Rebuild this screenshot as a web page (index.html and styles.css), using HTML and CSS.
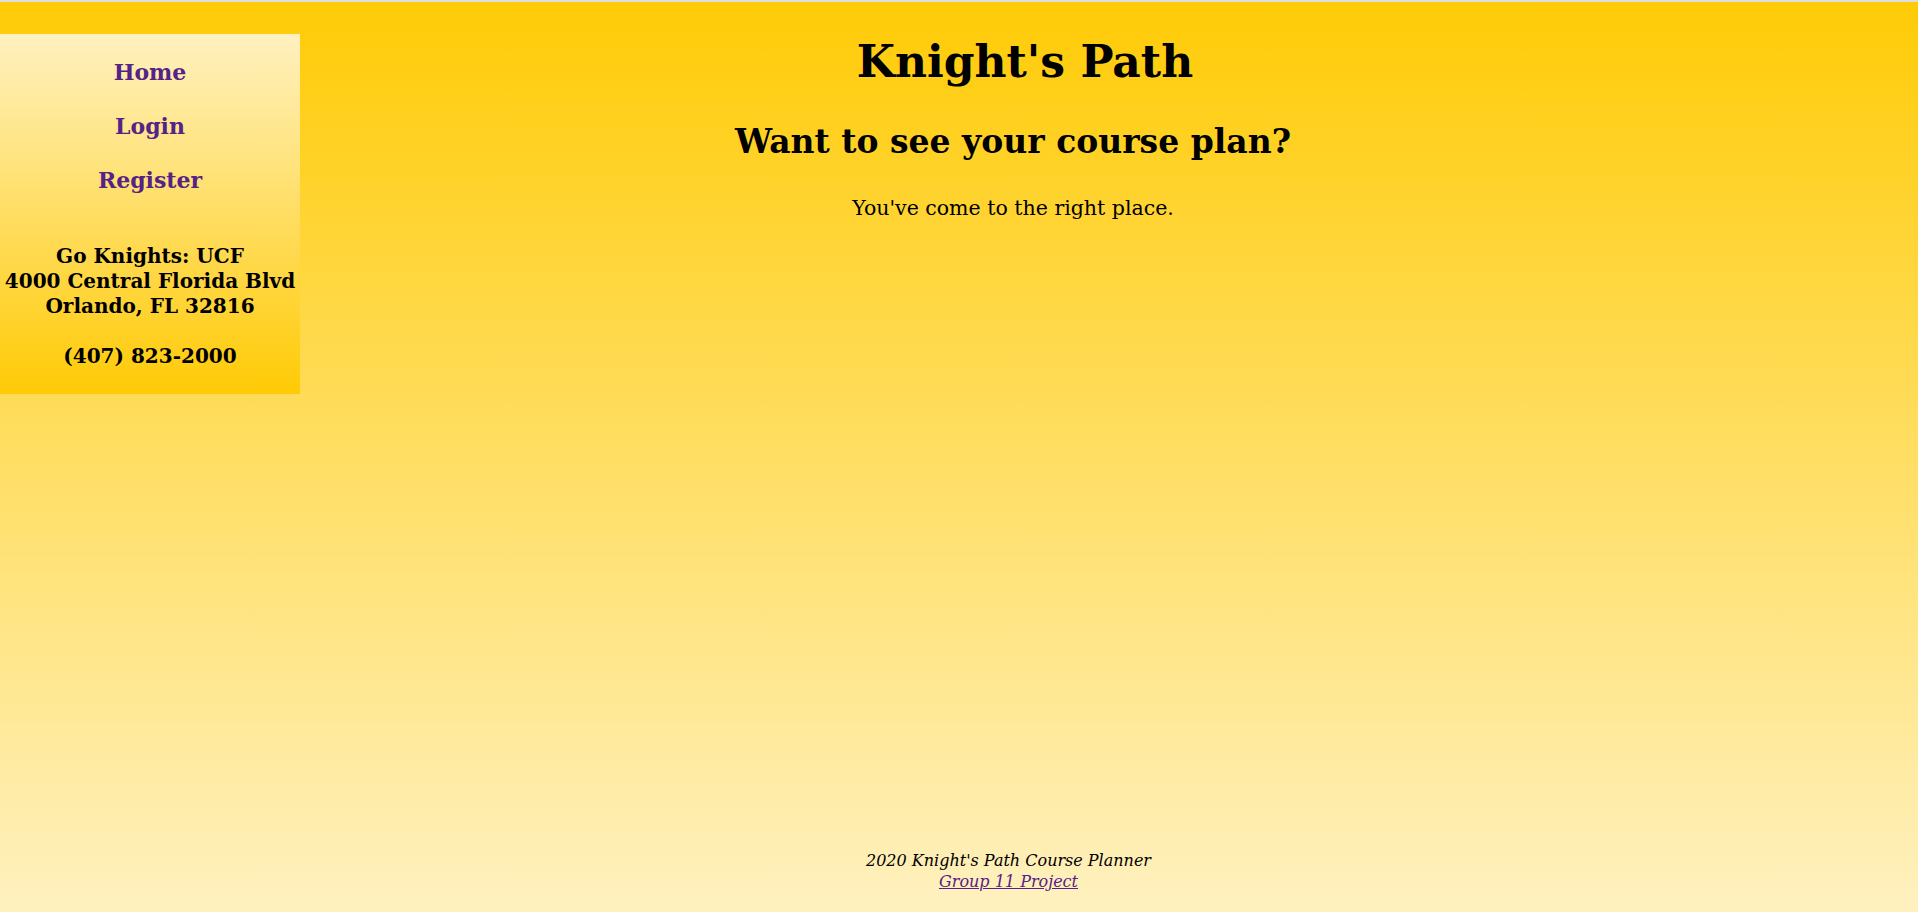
FILE: index.html
```html
<!DOCTYPE html>
<html lang="en">
<head>
<meta charset="utf-8">
<title>Knight's Path</title>
<link rel="stylesheet" href="styles.css">
</head>
<body>
<div class="page">
  <aside class="sidebar">
    <nav class="nav">
      <a class="nav-link" href="#">Home</a>
      <a class="nav-link" href="#">Login</a>
      <a class="nav-link" href="#">Register</a>
    </nav>
    <div class="address">
      <div>Go Knights: UCF</div>
      <div>4000 Central Florida Blvd</div>
      <div>Orlando, FL 32816</div>
    </div>
    <div class="phone">(407) 823-2000</div>
  </aside>
  <main class="main">
    <h1 class="title">Knight's Path</h1>
    <h2 class="subtitle">Want to see your course plan?</h2>
    <p class="lead">You've come to the right place.</p>
    <footer class="footer">
      <div class="footer-line">2020 Knight's Path Course Planner</div>
      <a class="footer-link" href="#">Group 11 Project</a>
    </footer>
  </main>
</div>
</body>
</html>
```
FILE: styles.css
```css
html, body {
  margin: 0;
  padding: 0;
  height: 100%;
}
body {
  font-family: "DejaVu Serif", "Liberation Serif", serif;
  color: #000;
  background: linear-gradient(to bottom, #ffcb06 0%, #fff1c0 100%);
  border-top: 2px solid #dedede;
  box-sizing: border-box;
}
.page {
  display: flex;
  height: 910px;
}
.sidebar {
  width: 300px;
  flex: none;
  align-self: flex-start;
  margin-top: 32px;
  padding: 11px 0 25px;
  background: linear-gradient(to bottom, #fff1c0 0%, #ffca05 100%);
  text-align: center;
  font-weight: bold;
}
.nav {
  display: flex;
  flex-direction: column;
}
.nav-link {
  display: block;
  font-size: 22px;
  line-height: 54px;
  color: #552288;
  text-decoration: none;
}
.address {
  margin-top: 37px;
  font-size: 20px;
  line-height: 25px;
}
.phone {
  margin-top: 25px;
  font-size: 20px;
  line-height: 25px;
}
.main {
  flex: 1;
  display: flex;
  flex-direction: column;
  align-items: center;
  text-align: center;
  padding: 34px 192px 20px 0;
}
.title {
  margin: 0;
  padding-left: 24px;
  font-size: 44px;
  line-height: 52px;
  font-weight: bold;
}
.subtitle {
  margin: 33px 0 0;
  font-size: 33px;
  line-height: 42px;
  font-weight: bold;
}
.lead {
  margin: 32px 0 0;
  font-size: 20.5px;
  line-height: 26px;
}
.footer {
  margin-top: auto;
  padding-right: 9px;
  font-style: italic;
  font-size: 16px;
  line-height: 21px;
}
.footer-line {
  display: block;
}
.footer-link {
  color: #552288;
}
```
